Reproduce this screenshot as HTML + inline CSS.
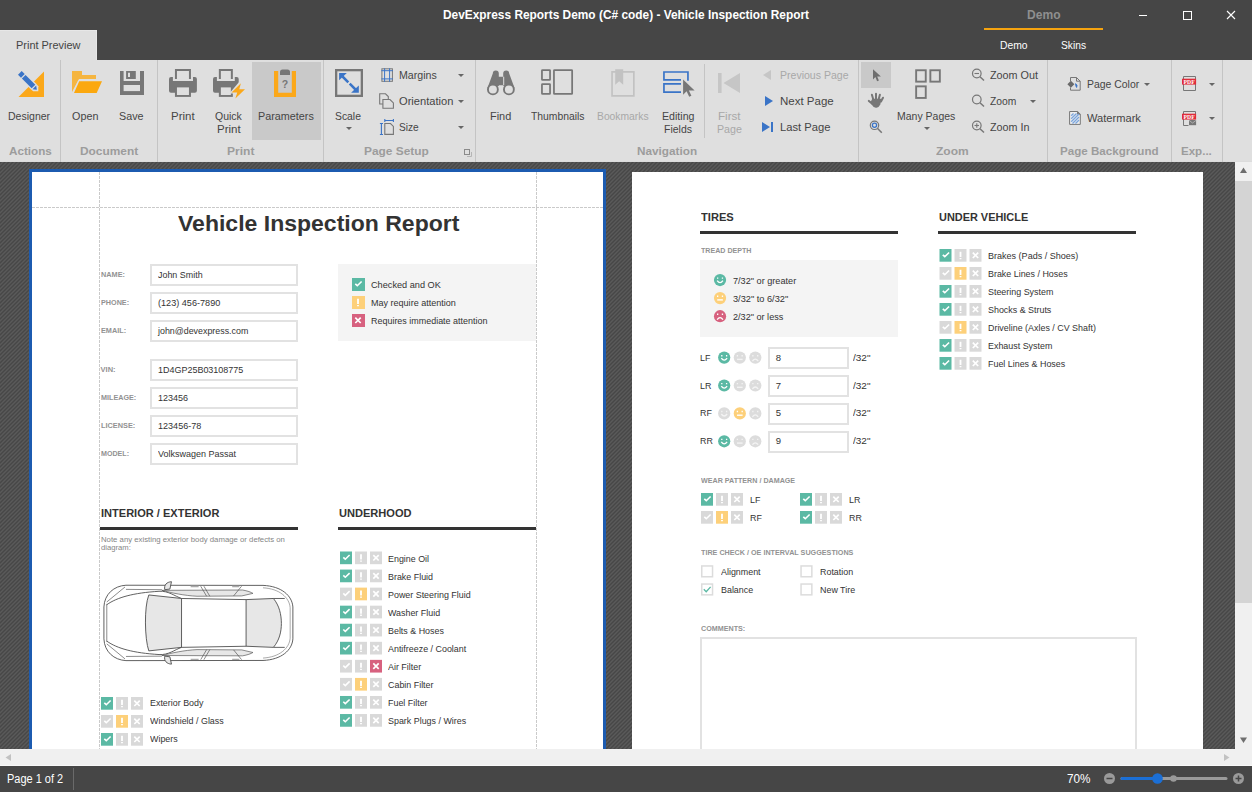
<!DOCTYPE html>
<html><head><meta charset="utf-8">
<style>
*{margin:0;padding:0;box-sizing:border-box}
html,body{width:1252px;height:792px;overflow:hidden;background:#464646;font-family:"Liberation Sans",sans-serif;position:relative}
.a{position:absolute}
.t{position:absolute;white-space:nowrap;line-height:1;transform-origin:0 0}
</style></head><body>
<div class="a" style="left:984px;top:28px;width:119px;height:2px;background:#f5a30f;"></div><div class="a" style="left:0px;top:30px;width:97px;height:31px;background:#dfdfdf;border-top:1px solid #e7e7e7;border-right:1px solid #e7e7e7"></div><div class="a" style="left:0px;top:60px;width:1252px;height:101px;background:#dfdfdf;"></div><div class="a" style="left:0px;top:161px;width:1252px;height:1px;background:#dcdcdc;"></div><div class="a" style="left:60px;top:60px;width:1px;height:102px;background:#c4c4c4;"></div><div class="a" style="left:157px;top:60px;width:1px;height:102px;background:#c4c4c4;"></div><div class="a" style="left:323px;top:60px;width:1px;height:102px;background:#c4c4c4;"></div><div class="a" style="left:475px;top:60px;width:1px;height:102px;background:#c4c4c4;"></div><div class="a" style="left:858px;top:60px;width:1px;height:102px;background:#c4c4c4;"></div><div class="a" style="left:1047px;top:60px;width:1px;height:102px;background:#c4c4c4;"></div><div class="a" style="left:1171px;top:60px;width:1px;height:102px;background:#c4c4c4;"></div><div class="a" style="left:1222px;top:60px;width:1px;height:102px;background:#c4c4c4;"></div><div class="a" style="left:704px;top:64px;width:1px;height:74px;background:#c4c4c4;"></div><div class="a" style="left:252px;top:62px;width:69px;height:78px;background:#c9c9c9;"></div><div class="a" style="left:861px;top:62px;width:30px;height:26px;background:#c9c9c9;"></div><svg class="a" style="left:0;top:162px" width="1235" height="587">
<defs><pattern id="st" width="4" height="4" patternUnits="userSpaceOnUse" patternTransform="translate(3,0)">
<rect width="4" height="4" fill="#474747"/>
<path d="M0 4L4 0M-1 1L1 -1M3 5L5 3" stroke="#5a5a5a" stroke-width="1.4"/>
</pattern></defs><rect width="1235" height="587" fill="url(#st)"/></svg><div class="a" style="left:1235px;top:162px;width:17px;height:587px;background:#f0f0f0;"></div><div class="a" style="left:1235px;top:181px;width:17px;height:422px;background:#d4d4d4;"></div><div class="a" style="left:0px;top:749px;width:1252px;height:17px;background:#f0f0f0;"></div><div class="a" style="left:0px;top:765px;width:1252px;height:1px;background:#f8f8f8;"></div><div class="a" style="left:0px;top:766px;width:1252px;height:26px;background:#464646;"></div><div class="a" style="left:73px;top:768px;width:1px;height:22px;background:#6a6a6a;"></div>
<div class="a" style="left:0;top:0;width:1235px;height:749px;clip-path:inset(162px 0 0 0)"><div class="a" style="left:29px;top:169px;width:577px;height:600px;background:#ffffff;border:3px solid #1c5bb0;border-bottom:none"></div><div class="a" style="left:99px;top:172px;width:1px;height:600px;background:repeating-linear-gradient(180deg,#cacaca 0 3px,transparent 3px 4px)"></div><div class="a" style="left:536px;top:172px;width:1px;height:600px;background:repeating-linear-gradient(180deg,#cacaca 0 3px,transparent 3px 4px)"></div><div class="a" style="left:32px;top:207px;width:571px;height:1px;background:repeating-linear-gradient(90deg,#cacaca 0 3px,transparent 3px 4px)"></div><div class="a" style="left:150px;top:264px;width:148px;height:22px;background:#fff;border:2px solid #e2e2e2"></div><div class="a" style="left:150px;top:292px;width:148px;height:22px;background:#fff;border:2px solid #e2e2e2"></div><div class="a" style="left:150px;top:320px;width:148px;height:22px;background:#fff;border:2px solid #e2e2e2"></div><div class="a" style="left:150px;top:359px;width:148px;height:22px;background:#fff;border:2px solid #e2e2e2"></div><div class="a" style="left:150px;top:387px;width:148px;height:22px;background:#fff;border:2px solid #e2e2e2"></div><div class="a" style="left:150px;top:415px;width:148px;height:22px;background:#fff;border:2px solid #e2e2e2"></div><div class="a" style="left:150px;top:443px;width:148px;height:22px;background:#fff;border:2px solid #e2e2e2"></div><div class="a" style="left:338px;top:264px;width:198px;height:77px;background:#f4f4f4;"></div><div class="a" style="left:100px;top:527px;width:198px;height:3px;background:#333333;"></div><div class="a" style="left:338px;top:527px;width:198px;height:3px;background:#333333;"></div><svg class="a" style="left:0;top:0" width="1235" height="749" viewBox="0 0 1235 749"><rect x="352" y="278" width="13" height="13" fill="#5bb9a4"/><path d="M355.3 283.8L357.3 285.7L361.6 281.5" fill="none" stroke="#ffffff" stroke-width="1.6"/><rect x="352" y="296" width="13" height="13" fill="#fdd07a"/><path d="M358 298.8V304M358 304.9V306.2" fill="none" stroke="#ffffff" stroke-width="1.8"/><rect x="352" y="314" width="13" height="13" fill="#d7617f"/><path d="M355.3 317.6L360.7 323M360.7 317.6L355.3 323" fill="none" stroke="#ffffff" stroke-width="1.7"/><rect x="340" y="551.5" width="12" height="12.7" fill="#5bb9a4"/><path d="M343.3 557.3L345.3 559.2L349.6 555.0" fill="none" stroke="#ffffff" stroke-width="1.6"/><rect x="355" y="551.5" width="12" height="12.7" fill="#d9d9d9"/><path d="M361 554.3V559.5M361 560.4V561.7" fill="none" stroke="#ffffff" stroke-width="1.8"/><rect x="370" y="551.5" width="12" height="12.7" fill="#d9d9d9"/><path d="M373.3 555.1L378.7 560.5M378.7 555.1L373.3 560.5" fill="none" stroke="#ffffff" stroke-width="1.7"/><rect x="340" y="569.56" width="12" height="12.7" fill="#5bb9a4"/><path d="M343.3 575.3599999999999L345.3 577.26L349.6 573.06" fill="none" stroke="#ffffff" stroke-width="1.6"/><rect x="355" y="569.56" width="12" height="12.7" fill="#d9d9d9"/><path d="M361 572.3599999999999V577.56M361 578.4599999999999V579.76" fill="none" stroke="#ffffff" stroke-width="1.8"/><rect x="370" y="569.56" width="12" height="12.7" fill="#d9d9d9"/><path d="M373.3 573.16L378.7 578.56M378.7 573.16L373.3 578.56" fill="none" stroke="#ffffff" stroke-width="1.7"/><rect x="340" y="587.62" width="12" height="12.7" fill="#d9d9d9"/><path d="M343.3 593.42L345.3 595.32L349.6 591.12" fill="none" stroke="#ffffff" stroke-width="1.6"/><rect x="355" y="587.62" width="12" height="12.7" fill="#fdd07a"/><path d="M361 590.42V595.62M361 596.52V597.82" fill="none" stroke="#ffffff" stroke-width="1.8"/><rect x="370" y="587.62" width="12" height="12.7" fill="#d9d9d9"/><path d="M373.3 591.22L378.7 596.62M378.7 591.22L373.3 596.62" fill="none" stroke="#ffffff" stroke-width="1.7"/><rect x="340" y="605.68" width="12" height="12.7" fill="#5bb9a4"/><path d="M343.3 611.4799999999999L345.3 613.38L349.6 609.18" fill="none" stroke="#ffffff" stroke-width="1.6"/><rect x="355" y="605.68" width="12" height="12.7" fill="#d9d9d9"/><path d="M361 608.4799999999999V613.68M361 614.5799999999999V615.88" fill="none" stroke="#ffffff" stroke-width="1.8"/><rect x="370" y="605.68" width="12" height="12.7" fill="#d9d9d9"/><path d="M373.3 609.28L378.7 614.68M378.7 609.28L373.3 614.68" fill="none" stroke="#ffffff" stroke-width="1.7"/><rect x="340" y="623.74" width="12" height="12.7" fill="#5bb9a4"/><path d="M343.3 629.54L345.3 631.44L349.6 627.24" fill="none" stroke="#ffffff" stroke-width="1.6"/><rect x="355" y="623.74" width="12" height="12.7" fill="#d9d9d9"/><path d="M361 626.54V631.74M361 632.64V633.94" fill="none" stroke="#ffffff" stroke-width="1.8"/><rect x="370" y="623.74" width="12" height="12.7" fill="#d9d9d9"/><path d="M373.3 627.34L378.7 632.74M378.7 627.34L373.3 632.74" fill="none" stroke="#ffffff" stroke-width="1.7"/><rect x="340" y="641.8" width="12" height="12.7" fill="#5bb9a4"/><path d="M343.3 647.5999999999999L345.3 649.5L349.6 645.3" fill="none" stroke="#ffffff" stroke-width="1.6"/><rect x="355" y="641.8" width="12" height="12.7" fill="#d9d9d9"/><path d="M361 644.5999999999999V649.8M361 650.6999999999999V652.0" fill="none" stroke="#ffffff" stroke-width="1.8"/><rect x="370" y="641.8" width="12" height="12.7" fill="#d9d9d9"/><path d="M373.3 645.4L378.7 650.8M378.7 645.4L373.3 650.8" fill="none" stroke="#ffffff" stroke-width="1.7"/><rect x="340" y="659.86" width="12" height="12.7" fill="#d9d9d9"/><path d="M343.3 665.66L345.3 667.5600000000001L349.6 663.36" fill="none" stroke="#ffffff" stroke-width="1.6"/><rect x="355" y="659.86" width="12" height="12.7" fill="#d9d9d9"/><path d="M361 662.66V667.86M361 668.76V670.0600000000001" fill="none" stroke="#ffffff" stroke-width="1.8"/><rect x="370" y="659.86" width="12" height="12.7" fill="#d7617f"/><path d="M373.3 663.46L378.7 668.86M378.7 663.46L373.3 668.86" fill="none" stroke="#ffffff" stroke-width="1.7"/><rect x="340" y="677.92" width="12" height="12.7" fill="#d9d9d9"/><path d="M343.3 683.7199999999999L345.3 685.62L349.6 681.42" fill="none" stroke="#ffffff" stroke-width="1.6"/><rect x="355" y="677.92" width="12" height="12.7" fill="#fdd07a"/><path d="M361 680.7199999999999V685.92M361 686.8199999999999V688.12" fill="none" stroke="#ffffff" stroke-width="1.8"/><rect x="370" y="677.92" width="12" height="12.7" fill="#d9d9d9"/><path d="M373.3 681.52L378.7 686.92M378.7 681.52L373.3 686.92" fill="none" stroke="#ffffff" stroke-width="1.7"/><rect x="340" y="695.98" width="12" height="12.7" fill="#5bb9a4"/><path d="M343.3 701.78L345.3 703.6800000000001L349.6 699.48" fill="none" stroke="#ffffff" stroke-width="1.6"/><rect x="355" y="695.98" width="12" height="12.7" fill="#d9d9d9"/><path d="M361 698.78V703.98M361 704.88V706.1800000000001" fill="none" stroke="#ffffff" stroke-width="1.8"/><rect x="370" y="695.98" width="12" height="12.7" fill="#d9d9d9"/><path d="M373.3 699.58L378.7 704.98M378.7 699.58L373.3 704.98" fill="none" stroke="#ffffff" stroke-width="1.7"/><rect x="340" y="714.04" width="12" height="12.7" fill="#5bb9a4"/><path d="M343.3 719.8399999999999L345.3 721.74L349.6 717.54" fill="none" stroke="#ffffff" stroke-width="1.6"/><rect x="355" y="714.04" width="12" height="12.7" fill="#d9d9d9"/><path d="M361 716.8399999999999V722.04M361 722.9399999999999V724.24" fill="none" stroke="#ffffff" stroke-width="1.8"/><rect x="370" y="714.04" width="12" height="12.7" fill="#d9d9d9"/><path d="M373.3 717.64L378.7 723.04M378.7 717.64L373.3 723.04" fill="none" stroke="#ffffff" stroke-width="1.7"/><rect x="101" y="697" width="12" height="12.7" fill="#5bb9a4"/><path d="M104.3 702.8L106.3 704.7L110.6 700.5" fill="none" stroke="#ffffff" stroke-width="1.6"/><rect x="116" y="697" width="12" height="12.7" fill="#d9d9d9"/><path d="M122 699.8V705M122 705.9V707.2" fill="none" stroke="#ffffff" stroke-width="1.8"/><rect x="131" y="697" width="12" height="12.7" fill="#d9d9d9"/><path d="M134.3 700.6L139.7 706M139.7 700.6L134.3 706" fill="none" stroke="#ffffff" stroke-width="1.7"/><rect x="101" y="715" width="12" height="12.7" fill="#d9d9d9"/><path d="M104.3 720.8L106.3 722.7L110.6 718.5" fill="none" stroke="#ffffff" stroke-width="1.6"/><rect x="116" y="715" width="12" height="12.7" fill="#fdd07a"/><path d="M122 717.8V723M122 723.9V725.2" fill="none" stroke="#ffffff" stroke-width="1.8"/><rect x="131" y="715" width="12" height="12.7" fill="#d9d9d9"/><path d="M134.3 718.6L139.7 724M139.7 718.6L134.3 724" fill="none" stroke="#ffffff" stroke-width="1.7"/><rect x="101" y="733" width="12" height="12.7" fill="#5bb9a4"/><path d="M104.3 738.8L106.3 740.7L110.6 736.5" fill="none" stroke="#ffffff" stroke-width="1.6"/><rect x="116" y="733" width="12" height="12.7" fill="#d9d9d9"/><path d="M122 735.8V741M122 741.9V743.2" fill="none" stroke="#ffffff" stroke-width="1.8"/><rect x="131" y="733" width="12" height="12.7" fill="#d9d9d9"/><path d="M134.3 736.6L139.7 742M139.7 736.6L134.3 742" fill="none" stroke="#ffffff" stroke-width="1.7"/><g transform="translate(98,575) scale(0.15974)" fill="none" stroke="#4a4a4a" stroke-width="5.5">
<path d="M175 64L1033 65C1150 70 1215 130 1220 200L1220 400C1215 470 1150 530 1033 535L175 536C100 532 40 480 37 400L37 200C40 120 100 68 175 64Z" fill="#fff"/>
<path d="M1033 80C1135 86 1198 140 1203 205L1203 395C1198 460 1135 514 1033 520" stroke-width="3.5" stroke="#666"/>
<path d="M55 181L55 419M55 169L169 75M55 431L169 525" stroke-width="4"/>
<path d="M55 186C120 140 220 112 382 102C440 98 480 132 523 147M55 414C120 460 220 488 382 498C440 502 480 468 523 453"/>
<path d="M318 125L523 147L523 453L318 475C292 400 288 200 318 125Z" fill="#e7e7e7"/>
<path d="M927 154L1098 147C1135 190 1148 250 1148 303C1148 356 1135 410 1098 453L927 446Z" fill="#e7e7e7"/>
<path d="M523 147L927 154M523 453L927 446M1098 147L1169 147M1098 453L1169 453"/>
<path d="M400 96L905 94C935 99 960 108 970 115L900 131L620 133C540 129 460 112 400 96Z" fill="#e7e7e7" stroke-width="4"/>
<path d="M400 504L905 506C935 501 960 492 970 485L900 469L620 467C540 471 460 488 400 504Z" fill="#e7e7e7" stroke-width="4"/>
<path d="M175 90L400 92M175 510L400 508" stroke-width="4"/>
<path d="M643 70L680 133M663 70L700 133M643 530L680 467M663 530L700 467M899 70L849 131M899 530L849 469" stroke-width="4"/>
<path d="M418 92C412 62 430 44 460 42L450 88Z" fill="#e7e7e7"/>
<path d="M418 508C412 538 430 556 460 558L450 512Z" fill="#e7e7e7"/>
<path d="M580 72H630M840 72H885M580 528H630M840 528H885" stroke-width="8" stroke="#aaa"/>
</g></svg><div class="t" id="t42" style="left:177.9px;top:213.48px;font-size:22px;font-weight:700;color:#333333;transform:scaleX(1.0463);">Vehicle Inspection Report</div><div class="t" id="t43" style="left:100.6px;top:270.75px;font-size:7.5px;font-weight:700;color:#929292;transform:scaleX(0.9759);">NAME:</div><div class="t" id="t44" style="left:158.2px;top:270.30px;font-size:9.8px;font-weight:400;color:#333333;transform:scaleX(0.9099);">John Smith</div><div class="t" id="t45" style="left:100.6px;top:298.75px;font-size:7.5px;font-weight:700;color:#929292;transform:scaleX(0.9633);">PHONE:</div><div class="t" id="t46" style="left:158.2px;top:298.30px;font-size:9.8px;font-weight:400;color:#333333;transform:scaleX(0.9299);">(123) 456-7890</div><div class="t" id="t47" style="left:100.6px;top:326.75px;font-size:7.5px;font-weight:700;color:#929292;transform:scaleX(0.9712);">EMAIL:</div><div class="t" id="t48" style="left:158.2px;top:326.30px;font-size:9.8px;font-weight:400;color:#333333;transform:scaleX(0.9048);">john@devexpress.com</div><div class="t" id="t49" style="left:100.6px;top:365.75px;font-size:7.5px;font-weight:700;color:#929292;transform:scaleX(1.0000);">VIN:</div><div class="t" id="t50" style="left:158.2px;top:365.30px;font-size:9.8px;font-weight:400;color:#333333;transform:scaleX(0.9157);">1D4GP25B03108775</div><div class="t" id="t51" style="left:100.6px;top:393.75px;font-size:7.5px;font-weight:700;color:#929292;transform:scaleX(0.9599);">MILEAGE:</div><div class="t" id="t52" style="left:158.2px;top:393.30px;font-size:9.8px;font-weight:400;color:#333333;transform:scaleX(0.9204);">123456</div><div class="t" id="t53" style="left:100.6px;top:421.75px;font-size:7.5px;font-weight:700;color:#929292;transform:scaleX(0.9796);">LICENSE:</div><div class="t" id="t54" style="left:158.2px;top:421.30px;font-size:9.8px;font-weight:400;color:#333333;transform:scaleX(0.9240);">123456-78</div><div class="t" id="t55" style="left:100.6px;top:449.75px;font-size:7.5px;font-weight:700;color:#929292;transform:scaleX(0.9495);">MODEL:</div><div class="t" id="t56" style="left:158.2px;top:449.30px;font-size:9.8px;font-weight:400;color:#333333;transform:scaleX(0.9168);">Volkswagen Passat</div><div class="t" id="t57" style="left:370.5px;top:280.46px;font-size:9.5px;font-weight:400;color:#333333;transform:scaleX(0.9646);">Checked and OK</div><div class="t" id="t58" style="left:370.5px;top:298.46px;font-size:9.5px;font-weight:400;color:#333333;transform:scaleX(0.9501);">May require attention</div><div class="t" id="t59" style="left:370.5px;top:316.46px;font-size:9.5px;font-weight:400;color:#333333;transform:scaleX(0.9419);">Requires immediate attention</div><div class="t" id="t60" style="left:100.9px;top:507.69px;font-size:11px;font-weight:700;color:#333333;transform:scaleX(1.0037);">INTERIOR / EXTERIOR</div><div class="t" id="t61" style="left:100.7px;top:535.97px;font-size:7px;font-weight:400;color:#858585;transform:scaleX(1.1094);">Note any existing exterior body damage or defects on</div><div class="t" id="t62" style="left:100.7px;top:544.47px;font-size:7px;font-weight:400;color:#858585;transform:scaleX(1.0942);">diagram:</div><div class="t" id="t63" style="left:339.2px;top:507.69px;font-size:11px;font-weight:700;color:#333333;transform:scaleX(1.0066);">UNDERHOOD</div><div class="t" id="t64" style="left:387.8px;top:553.56px;font-size:9.5px;font-weight:400;color:#333333;transform:scaleX(0.937);">Engine Oil</div><div class="t" id="t65" style="left:387.8px;top:571.62px;font-size:9.5px;font-weight:400;color:#333333;transform:scaleX(0.937);">Brake Fluid</div><div class="t" id="t66" style="left:387.8px;top:589.68px;font-size:9.5px;font-weight:400;color:#333333;transform:scaleX(0.937);">Power Steering Fluid</div><div class="t" id="t67" style="left:387.8px;top:607.74px;font-size:9.5px;font-weight:400;color:#333333;transform:scaleX(0.937);">Washer Fluid</div><div class="t" id="t68" style="left:387.8px;top:625.80px;font-size:9.5px;font-weight:400;color:#333333;transform:scaleX(0.937);">Belts &amp; Hoses</div><div class="t" id="t69" style="left:387.8px;top:643.86px;font-size:9.5px;font-weight:400;color:#333333;transform:scaleX(0.937);">Antifreeze / Coolant</div><div class="t" id="t70" style="left:387.8px;top:661.92px;font-size:9.5px;font-weight:400;color:#333333;transform:scaleX(0.937);">Air Filter</div><div class="t" id="t71" style="left:387.8px;top:679.98px;font-size:9.5px;font-weight:400;color:#333333;transform:scaleX(0.937);">Cabin Filter</div><div class="t" id="t72" style="left:387.8px;top:698.04px;font-size:9.5px;font-weight:400;color:#333333;transform:scaleX(0.937);">Fuel Filter</div><div class="t" id="t73" style="left:387.8px;top:716.10px;font-size:9.5px;font-weight:400;color:#333333;transform:scaleX(0.937);">Spark Plugs / Wires</div><div class="t" id="t74" style="left:149.5px;top:697.86px;font-size:9.5px;font-weight:400;color:#333333;transform:scaleX(0.937);">Exterior Body</div><div class="t" id="t75" style="left:149.5px;top:715.86px;font-size:9.5px;font-weight:400;color:#333333;transform:scaleX(0.937);">Windshield / Glass</div><div class="t" id="t76" style="left:149.5px;top:733.86px;font-size:9.5px;font-weight:400;color:#333333;transform:scaleX(0.937);">Wipers</div><div class="a" style="left:632px;top:172px;width:571px;height:600px;background:#ffffff;"></div><div class="a" style="left:700px;top:231px;width:198px;height:3px;background:#333333;"></div><div class="a" style="left:938px;top:231px;width:198px;height:3px;background:#333333;"></div><div class="a" style="left:700px;top:260px;width:198px;height:77px;background:#f4f4f4;"></div><div class="a" style="left:768px;top:347px;width:81px;height:22px;background:#fff;border:2px solid #e2e2e2"></div><div class="a" style="left:768px;top:375px;width:81px;height:22px;background:#fff;border:2px solid #e2e2e2"></div><div class="a" style="left:768px;top:403px;width:81px;height:22px;background:#fff;border:2px solid #e2e2e2"></div><div class="a" style="left:768px;top:431px;width:81px;height:22px;background:#fff;border:2px solid #e2e2e2"></div><div class="a" style="left:700px;top:637px;width:437px;height:200px;background:#fff;border:2px solid #e2e2e2"></div><svg class="a" style="left:0;top:0" width="1235" height="749" viewBox="0 0 1235 749"><circle cx="720.05" cy="280.05" r="6.1" fill="#5bb9a4"/><path d="M717.65 277.45V278.85M722.4499999999999 277.45V278.85" stroke="#ffffff" stroke-width="1.3"/><path d="M717.15 280.65000000000003Q720.05 284.65000000000003 722.9499999999999 280.65000000000003" fill="none" stroke="#ffffff" stroke-width="1.3"/><circle cx="720.05" cy="298.1" r="6.1" fill="#fdd07a"/><path d="M717.65 295.5V296.90000000000003M722.4499999999999 295.5V296.90000000000003" stroke="#ffffff" stroke-width="1.3"/><path d="M717.25 299.90000000000003H722.8499999999999" stroke="#ffffff" stroke-width="1.4"/><circle cx="720.05" cy="316.2" r="6.1" fill="#d7617f"/><path d="M717.65 313.59999999999997V315.0M722.4499999999999 313.59999999999997V315.0" stroke="#ffffff" stroke-width="1.3"/><path d="M717.15 319.59999999999997Q720.05 315.8 722.9499999999999 319.59999999999997" fill="none" stroke="#ffffff" stroke-width="1.3"/><circle cx="724.2" cy="357.6" r="6.1" fill="#5bb9a4"/><path d="M721.8000000000001 355.0V356.40000000000003M726.6 355.0V356.40000000000003" stroke="#ffffff" stroke-width="1.3"/><path d="M721.3000000000001 358.20000000000005Q724.2 362.20000000000005 727.1 358.20000000000005" fill="none" stroke="#ffffff" stroke-width="1.3"/><circle cx="739.8" cy="357.6" r="6.1" fill="#dcdcdc"/><path d="M737.4 355.0V356.40000000000003M742.1999999999999 355.0V356.40000000000003" stroke="#f3f3f3" stroke-width="1.3"/><path d="M737.0 359.40000000000003H742.5999999999999" stroke="#f3f3f3" stroke-width="1.4"/><circle cx="755.3" cy="357.6" r="6.1" fill="#dcdcdc"/><path d="M752.9 355.0V356.40000000000003M757.6999999999999 355.0V356.40000000000003" stroke="#f3f3f3" stroke-width="1.3"/><path d="M752.4 361.0Q755.3 357.20000000000005 758.1999999999999 361.0" fill="none" stroke="#f3f3f3" stroke-width="1.3"/><circle cx="724.2" cy="385.5" r="6.1" fill="#5bb9a4"/><path d="M721.8000000000001 382.9V384.3M726.6 382.9V384.3" stroke="#ffffff" stroke-width="1.3"/><path d="M721.3000000000001 386.1Q724.2 390.1 727.1 386.1" fill="none" stroke="#ffffff" stroke-width="1.3"/><circle cx="739.8" cy="385.5" r="6.1" fill="#dcdcdc"/><path d="M737.4 382.9V384.3M742.1999999999999 382.9V384.3" stroke="#f3f3f3" stroke-width="1.3"/><path d="M737.0 387.3H742.5999999999999" stroke="#f3f3f3" stroke-width="1.4"/><circle cx="755.3" cy="385.5" r="6.1" fill="#dcdcdc"/><path d="M752.9 382.9V384.3M757.6999999999999 382.9V384.3" stroke="#f3f3f3" stroke-width="1.3"/><path d="M752.4 388.9Q755.3 385.1 758.1999999999999 388.9" fill="none" stroke="#f3f3f3" stroke-width="1.3"/><circle cx="724.2" cy="413.40000000000003" r="6.1" fill="#dcdcdc"/><path d="M721.8000000000001 410.8V412.20000000000005M726.6 410.8V412.20000000000005" stroke="#f3f3f3" stroke-width="1.3"/><path d="M721.3000000000001 414.00000000000006Q724.2 418.00000000000006 727.1 414.00000000000006" fill="none" stroke="#f3f3f3" stroke-width="1.3"/><circle cx="739.8" cy="413.40000000000003" r="6.1" fill="#fdd07a"/><path d="M737.4 410.8V412.20000000000005M742.1999999999999 410.8V412.20000000000005" stroke="#ffffff" stroke-width="1.3"/><path d="M737.0 415.20000000000005H742.5999999999999" stroke="#ffffff" stroke-width="1.4"/><circle cx="755.3" cy="413.40000000000003" r="6.1" fill="#dcdcdc"/><path d="M752.9 410.8V412.20000000000005M757.6999999999999 410.8V412.20000000000005" stroke="#f3f3f3" stroke-width="1.3"/><path d="M752.4 416.8Q755.3 413.00000000000006 758.1999999999999 416.8" fill="none" stroke="#f3f3f3" stroke-width="1.3"/><circle cx="724.2" cy="441.3" r="6.1" fill="#5bb9a4"/><path d="M721.8000000000001 438.7V440.1M726.6 438.7V440.1" stroke="#ffffff" stroke-width="1.3"/><path d="M721.3000000000001 441.90000000000003Q724.2 445.90000000000003 727.1 441.90000000000003" fill="none" stroke="#ffffff" stroke-width="1.3"/><circle cx="739.8" cy="441.3" r="6.1" fill="#dcdcdc"/><path d="M737.4 438.7V440.1M742.1999999999999 438.7V440.1" stroke="#f3f3f3" stroke-width="1.3"/><path d="M737.0 443.1H742.5999999999999" stroke="#f3f3f3" stroke-width="1.4"/><circle cx="755.3" cy="441.3" r="6.1" fill="#dcdcdc"/><path d="M752.9 438.7V440.1M757.6999999999999 438.7V440.1" stroke="#f3f3f3" stroke-width="1.3"/><path d="M752.4 444.7Q755.3 440.90000000000003 758.1999999999999 444.7" fill="none" stroke="#f3f3f3" stroke-width="1.3"/><rect x="939.5" y="249.0" width="12" height="12.7" fill="#5bb9a4"/><path d="M942.8 254.8L944.8 256.7L949.1 252.5" fill="none" stroke="#fff" stroke-width="1.6"/><rect x="954.5" y="249.0" width="12" height="12.7" fill="#d9d9d9"/><path d="M960.5 251.8V257.0M960.5 257.9V259.2" fill="none" stroke="#fff" stroke-width="1.8"/><rect x="969.5" y="249.0" width="12" height="12.7" fill="#d9d9d9"/><path d="M972.8 252.6L978.2 258.0M978.2 252.6L972.8 258.0" fill="none" stroke="#fff" stroke-width="1.7"/><rect x="939.5" y="267.0" width="12" height="12.7" fill="#d9d9d9"/><path d="M942.8 272.8L944.8 274.7L949.1 270.5" fill="none" stroke="#fff" stroke-width="1.6"/><rect x="954.5" y="267.0" width="12" height="12.7" fill="#fdd07a"/><path d="M960.5 269.8V275.0M960.5 275.9V277.2" fill="none" stroke="#fff" stroke-width="1.8"/><rect x="969.5" y="267.0" width="12" height="12.7" fill="#d9d9d9"/><path d="M972.8 270.6L978.2 276.0M978.2 270.6L972.8 276.0" fill="none" stroke="#fff" stroke-width="1.7"/><rect x="939.5" y="285.0" width="12" height="12.7" fill="#5bb9a4"/><path d="M942.8 290.8L944.8 292.7L949.1 288.5" fill="none" stroke="#fff" stroke-width="1.6"/><rect x="954.5" y="285.0" width="12" height="12.7" fill="#d9d9d9"/><path d="M960.5 287.8V293.0M960.5 293.9V295.2" fill="none" stroke="#fff" stroke-width="1.8"/><rect x="969.5" y="285.0" width="12" height="12.7" fill="#d9d9d9"/><path d="M972.8 288.6L978.2 294.0M978.2 288.6L972.8 294.0" fill="none" stroke="#fff" stroke-width="1.7"/><rect x="939.5" y="303.0" width="12" height="12.7" fill="#5bb9a4"/><path d="M942.8 308.8L944.8 310.7L949.1 306.5" fill="none" stroke="#fff" stroke-width="1.6"/><rect x="954.5" y="303.0" width="12" height="12.7" fill="#d9d9d9"/><path d="M960.5 305.8V311.0M960.5 311.9V313.2" fill="none" stroke="#fff" stroke-width="1.8"/><rect x="969.5" y="303.0" width="12" height="12.7" fill="#d9d9d9"/><path d="M972.8 306.6L978.2 312.0M978.2 306.6L972.8 312.0" fill="none" stroke="#fff" stroke-width="1.7"/><rect x="939.5" y="321.0" width="12" height="12.7" fill="#d9d9d9"/><path d="M942.8 326.8L944.8 328.7L949.1 324.5" fill="none" stroke="#fff" stroke-width="1.6"/><rect x="954.5" y="321.0" width="12" height="12.7" fill="#fdd07a"/><path d="M960.5 323.8V329.0M960.5 329.9V331.2" fill="none" stroke="#fff" stroke-width="1.8"/><rect x="969.5" y="321.0" width="12" height="12.7" fill="#d9d9d9"/><path d="M972.8 324.6L978.2 330.0M978.2 324.6L972.8 330.0" fill="none" stroke="#fff" stroke-width="1.7"/><rect x="939.5" y="339.0" width="12" height="12.7" fill="#5bb9a4"/><path d="M942.8 344.8L944.8 346.7L949.1 342.5" fill="none" stroke="#fff" stroke-width="1.6"/><rect x="954.5" y="339.0" width="12" height="12.7" fill="#d9d9d9"/><path d="M960.5 341.8V347.0M960.5 347.9V349.2" fill="none" stroke="#fff" stroke-width="1.8"/><rect x="969.5" y="339.0" width="12" height="12.7" fill="#d9d9d9"/><path d="M972.8 342.6L978.2 348.0M978.2 342.6L972.8 348.0" fill="none" stroke="#fff" stroke-width="1.7"/><rect x="939.5" y="357.0" width="12" height="12.7" fill="#5bb9a4"/><path d="M942.8 362.8L944.8 364.7L949.1 360.5" fill="none" stroke="#fff" stroke-width="1.6"/><rect x="954.5" y="357.0" width="12" height="12.7" fill="#d9d9d9"/><path d="M960.5 359.8V365.0M960.5 365.9V367.2" fill="none" stroke="#fff" stroke-width="1.8"/><rect x="969.5" y="357.0" width="12" height="12.7" fill="#d9d9d9"/><path d="M972.8 360.6L978.2 366.0M978.2 360.6L972.8 366.0" fill="none" stroke="#fff" stroke-width="1.7"/><rect x="701" y="493" width="12" height="12.7" fill="#5bb9a4"/><path d="M704.3 498.8L706.3 500.7L710.6 496.5" fill="none" stroke="#fff" stroke-width="1.6"/><rect x="716" y="493" width="12" height="12.7" fill="#d9d9d9"/><path d="M722 495.8V501M722 501.9V503.2" fill="none" stroke="#fff" stroke-width="1.8"/><rect x="731" y="493" width="12" height="12.7" fill="#d9d9d9"/><path d="M734.3 496.6L739.7 502M739.7 496.6L734.3 502" fill="none" stroke="#fff" stroke-width="1.7"/><rect x="701" y="511" width="12" height="12.7" fill="#d9d9d9"/><path d="M704.3 516.8L706.3 518.7L710.6 514.5" fill="none" stroke="#fff" stroke-width="1.6"/><rect x="716" y="511" width="12" height="12.7" fill="#fdd07a"/><path d="M722 513.8V519M722 519.9V521.2" fill="none" stroke="#fff" stroke-width="1.8"/><rect x="731" y="511" width="12" height="12.7" fill="#d9d9d9"/><path d="M734.3 514.6L739.7 520M739.7 514.6L734.3 520" fill="none" stroke="#fff" stroke-width="1.7"/><rect x="800" y="493" width="12" height="12.7" fill="#5bb9a4"/><path d="M803.3 498.8L805.3 500.7L809.6 496.5" fill="none" stroke="#fff" stroke-width="1.6"/><rect x="815" y="493" width="12" height="12.7" fill="#d9d9d9"/><path d="M821 495.8V501M821 501.9V503.2" fill="none" stroke="#fff" stroke-width="1.8"/><rect x="830" y="493" width="12" height="12.7" fill="#d9d9d9"/><path d="M833.3 496.6L838.7 502M838.7 496.6L833.3 502" fill="none" stroke="#fff" stroke-width="1.7"/><rect x="800" y="511" width="12" height="12.7" fill="#5bb9a4"/><path d="M803.3 516.8L805.3 518.7L809.6 514.5" fill="none" stroke="#fff" stroke-width="1.6"/><rect x="815" y="511" width="12" height="12.7" fill="#d9d9d9"/><path d="M821 513.8V519M821 519.9V521.2" fill="none" stroke="#fff" stroke-width="1.8"/><rect x="830" y="511" width="12" height="12.7" fill="#d9d9d9"/><path d="M833.3 514.6L838.7 520M838.7 514.6L833.3 520" fill="none" stroke="#fff" stroke-width="1.7"/><rect x="701.75" y="565.95" width="10.8" height="10.8" fill="#fff" stroke="#dcdcdc" stroke-width="1.5"/><rect x="701.75" y="584.0500000000001" width="10.8" height="10.8" fill="#fff" stroke="#dcdcdc" stroke-width="1.5"/><path d="M703.8 589.3000000000001L706.2 591.7L710.6 586.9000000000001" fill="none" stroke="#5bb9a4" stroke-width="1.3"/><rect x="801.05" y="565.95" width="10.8" height="10.8" fill="#fff" stroke="#dcdcdc" stroke-width="1.5"/><rect x="801.05" y="584.0500000000001" width="10.8" height="10.8" fill="#fff" stroke="#dcdcdc" stroke-width="1.5"/></svg><div class="t" id="t77" style="left:701.0px;top:211.89px;font-size:11px;font-weight:700;color:#333333;transform:scaleX(1.0122);">TIRES</div><div class="t" id="t78" style="left:939.0px;top:211.59px;font-size:11px;font-weight:700;color:#333333;transform:scaleX(0.9928);">UNDER VEHICLE</div><div class="t" id="t79" style="left:701.0px;top:247.05px;font-size:7.5px;font-weight:700;color:#929292;transform:scaleX(0.9467);">TREAD DEPTH</div><div class="t" id="t80" style="left:732.5px;top:276.36px;font-size:9.5px;font-weight:400;color:#333333;transform:scaleX(0.9619);">7/32" or greater</div><div class="t" id="t81" style="left:732.5px;top:294.46px;font-size:9.5px;font-weight:400;color:#333333;transform:scaleX(0.9695);">3/32" to 6/32"</div><div class="t" id="t82" style="left:732.5px;top:312.36px;font-size:9.5px;font-weight:400;color:#333333;transform:scaleX(0.9584);">2/32" or less</div><div class="t" id="t83" style="left:700.4px;top:352.66px;font-size:9.5px;font-weight:400;color:#333333;transform:scaleX(0.937);">LF</div><div class="t" id="t84" style="left:775.8px;top:352.66px;font-size:9.5px;font-weight:400;color:#333333;">8</div><div class="t" id="t85" style="left:853.2px;top:352.66px;font-size:9.5px;font-weight:400;color:#333333;transform:scaleX(1.0546);">/32"</div><div class="t" id="t86" style="left:700.4px;top:380.56px;font-size:9.5px;font-weight:400;color:#333333;transform:scaleX(0.937);">LR</div><div class="t" id="t87" style="left:775.8px;top:380.56px;font-size:9.5px;font-weight:400;color:#333333;">7</div><div class="t" id="t88" style="left:853.2px;top:380.56px;font-size:9.5px;font-weight:400;color:#333333;transform:scaleX(1.0546);">/32"</div><div class="t" id="t89" style="left:700.4px;top:408.46px;font-size:9.5px;font-weight:400;color:#333333;transform:scaleX(0.937);">RF</div><div class="t" id="t90" style="left:775.8px;top:408.46px;font-size:9.5px;font-weight:400;color:#333333;">5</div><div class="t" id="t91" style="left:853.2px;top:408.46px;font-size:9.5px;font-weight:400;color:#333333;transform:scaleX(1.0546);">/32"</div><div class="t" id="t92" style="left:700.4px;top:436.36px;font-size:9.5px;font-weight:400;color:#333333;transform:scaleX(0.937);">RR</div><div class="t" id="t93" style="left:775.8px;top:436.36px;font-size:9.5px;font-weight:400;color:#333333;">9</div><div class="t" id="t94" style="left:853.2px;top:436.36px;font-size:9.5px;font-weight:400;color:#333333;transform:scaleX(1.0546);">/32"</div><div class="t" id="t95" style="left:987.9px;top:251.06px;font-size:9.5px;font-weight:400;color:#333333;transform:scaleX(0.9501);">Brakes (Pads / Shoes)</div><div class="t" id="t96" style="left:987.9px;top:269.06px;font-size:9.5px;font-weight:400;color:#333333;transform:scaleX(0.937);">Brake Lines / Hoses</div><div class="t" id="t97" style="left:987.9px;top:287.06px;font-size:9.5px;font-weight:400;color:#333333;transform:scaleX(0.937);">Steering System</div><div class="t" id="t98" style="left:987.9px;top:305.06px;font-size:9.5px;font-weight:400;color:#333333;transform:scaleX(0.937);">Shocks &amp; Struts</div><div class="t" id="t99" style="left:987.9px;top:323.06px;font-size:9.5px;font-weight:400;color:#333333;transform:scaleX(0.937);">Driveline (Axles / CV Shaft)</div><div class="t" id="t100" style="left:987.9px;top:341.06px;font-size:9.5px;font-weight:400;color:#333333;transform:scaleX(0.937);">Exhaust System</div><div class="t" id="t101" style="left:987.9px;top:359.06px;font-size:9.5px;font-weight:400;color:#333333;transform:scaleX(0.937);">Fuel Lines &amp; Hoses</div><div class="t" id="t102" style="left:700.7px;top:477.05px;font-size:7.5px;font-weight:700;color:#929292;transform:scaleX(0.9516);">WEAR PATTERN / DAMAGE</div><div class="t" id="t103" style="left:749.9px;top:495.06px;font-size:9.5px;font-weight:400;color:#333333;transform:scaleX(0.937);">LF</div><div class="t" id="t104" style="left:749.9px;top:513.06px;font-size:9.5px;font-weight:400;color:#333333;transform:scaleX(0.937);">RF</div><div class="t" id="t105" style="left:848.8px;top:495.06px;font-size:9.5px;font-weight:400;color:#333333;transform:scaleX(0.937);">LR</div><div class="t" id="t106" style="left:848.8px;top:513.06px;font-size:9.5px;font-weight:400;color:#333333;transform:scaleX(0.937);">RR</div><div class="t" id="t107" style="left:700.7px;top:548.65px;font-size:7.5px;font-weight:700;color:#929292;transform:scaleX(0.9598);">TIRE CHECK / OE INTERVAL SUGGESTIONS</div><div class="t" id="t108" style="left:720.7px;top:566.56px;font-size:9.5px;font-weight:400;color:#333333;transform:scaleX(0.937);">Alignment</div><div class="t" id="t109" style="left:720.7px;top:584.66px;font-size:9.5px;font-weight:400;color:#333333;transform:scaleX(0.937);">Balance</div><div class="t" id="t110" style="left:819.5px;top:566.56px;font-size:9.5px;font-weight:400;color:#333333;transform:scaleX(0.937);">Rotation</div><div class="t" id="t111" style="left:819.5px;top:584.66px;font-size:9.5px;font-weight:400;color:#333333;transform:scaleX(0.937);">New Tire</div><div class="t" id="t112" style="left:700.7px;top:624.65px;font-size:7.5px;font-weight:700;color:#929292;transform:scaleX(0.9557);">COMMENTS:</div></div>
<svg class="a" style="left:0;top:0" width="1252" height="792" viewBox="0 0 1252 792"><path d="M1139 15.5H1147" stroke="#fff" stroke-width="1"/><rect x="1183.5" y="11.5" width="8" height="8" fill="none" stroke="#fff" stroke-width="1"/><path d="M1227 11L1235 19M1235 11L1227 19" stroke="#fff" stroke-width="1.1"/><path d="M346 127.0H352L349 130.0Z" fill="#666"/><path d="M458 74.0H464L461 77.0Z" fill="#666"/><path d="M458 100.0H464L461 103.0Z" fill="#666"/><path d="M458 126.0H464L461 129.0Z" fill="#666"/><path d="M924 127.0H930L927 130.0Z" fill="#666"/><path d="M1030 100.0H1036L1033 103.0Z" fill="#666"/><path d="M1144 83.0H1150L1147 86.0Z" fill="#666"/><path d="M1209 83.0H1215L1212 86.0Z" fill="#666"/><path d="M1209 117.0H1215L1212 120.0Z" fill="#666"/><rect x="464.5" y="149.5" width="5" height="5" fill="none" stroke="#8a8a8a" stroke-width="1"/><path d="M467 156.5H471.5V152" fill="none" stroke="#b5b5b5" stroke-width="1"/><path d="M1240 173L1243.5 167.5L1247 173Z" fill="#6e6e6e"/><path d="M1240 737.5L1243.5 743L1247 737.5Z" fill="#6e6e6e"/><path d="M11 754L5.5 757.5L11 761Z" fill="#c2c2c2"/><path d="M1224 754L1229.5 757.5L1224 761Z" fill="#c2c2c2"/><circle cx="1109.5" cy="778.5" r="5.5" fill="#9a9a9a"/><path d="M1106.5 778.5H1112.5" stroke="#464646" stroke-width="1.5"/><circle cx="1238.5" cy="778.5" r="5.5" fill="#9a9a9a"/><path d="M1235.5 778.5H1241.5M1238.5 775.5V781.5" stroke="#464646" stroke-width="1.5"/><path d="M1122 778.5H1226" stroke="#9a9a9a" stroke-width="3" stroke-linecap="round"/><path d="M1122 778.5H1157" stroke="#1b6fd6" stroke-width="3" stroke-linecap="round"/><circle cx="1173.5" cy="778.5" r="3.3" fill="#9a9a9a"/><circle cx="1157.5" cy="778.5" r="5.3" fill="#1b6fd6"/><path d="M18.5 97L44 71.5V97Z" fill="#fba81a"/><path d="M21.83 69.46L35.97 83.60L38.30 86.20L38.30 91.20L33.20 91.20L30.60 88.97L16.46 74.83Z" fill="#dfdfdf"/><path d="M21.69 71.01L24.73 74.05L21.05 77.73L18.01 74.69Z" fill="#3a74c7"/><path d="M25.58 74.90L35.34 84.66L31.66 88.34L21.90 78.58Z" fill="#3a74c7"/><path d="M36.18 85.51L36.82 89.82L32.51 89.18Z" fill="#3a74c7"/><path d="M72 71H82V75H96V79H79L72 92Z" fill="#f5b540"/><path d="M78.3 80.3H102.5L97 93H72.5Z" fill="#dfdfdf"/><path d="M79.2 81.2H102L96.7 93H74Z" fill="#fba80f"/><path d="M120 71H144V95H120Z" fill="#777777"/><path d="M123.6 71H140V81H123.6Z" fill="#dfdfdf"/><path d="M126.1 71H135.8V79H126.1Z" fill="#777777"/><path d="M128 72.8H130V77H128Z" fill="#dfdfdf"/><path d="M123.6 85H140V91.1H123.6Z" fill="#dfdfdf"/><path d="M174.95 69H190.95V78.9H188.95V71H176.95V78.9H174.95Z" fill="#777777"/><path d="M169 79Q169 77 171 77H172.9V81H193.0V77H194.9Q196.9 77 196.9 79V90.8Q196.9 92.8 194.9 92.8H171Q169 92.8 169 90.8Z" fill="#777777"/><rect x="174.95" y="86.6" width="16" height="10.3" fill="#777777"/><rect x="176.95" y="87.4" width="12" height="7.6" fill="#dfdfdf"/><path d="M218.85 69H232.85V78.9H230.85V71H220.85V78.9H218.85Z" fill="#777777"/><path d="M213 79Q213 77 215 77H216.9V81H234.79999999999998V77H236.7Q238.7 77 238.7 79V90.8Q238.7 92.8 236.7 92.8H215Q213 92.8 213 90.8Z" fill="#777777"/><rect x="218.85" y="86.6" width="14" height="10.3" fill="#777777"/><rect x="220.85" y="87.4" width="10" height="7.6" fill="#dfdfdf"/><path d="M239.5 81.5L229.3 93.6H235.3L233.2 100.5L247.5 88H241.5L243.5 81.5Z" fill="#dfdfdf"/><path d="M240.9 83.2L231.5 92.6H237.2L235.4 98.6L245 89.2H239.3Z" fill="#fba81a"/><path d="M274 71H278.2V92.8H291.8V71H296V97H274Z" fill="#fba81a"/><path d="M280 75V72Q280 69.5 282.5 69.5H287.5Q290 69.5 290 72V75Z" fill="#777777"/><text x="285" y="88.3" font-family="Liberation Sans" font-weight="700" font-size="10.5" fill="#777777" text-anchor="middle">?</text><rect x="336.15" y="70.15" width="25.7" height="25.7" fill="none" stroke="#777777" stroke-width="2.3"/><path d="M342.5 76.5L348.3 82.3M349.7 83.7L355.5 89.5" stroke="#3a74c7" stroke-width="2.5"/><path d="M339.1 73.1H346.8L339.1 80.3Z" fill="#3a74c7"/><path d="M358.8 92.8H351.1L358.8 85.6Z" fill="#3a74c7"/><rect x="381.9" y="68.8" width="10.5" height="12.5" fill="none" stroke="#777777" stroke-width="1"/><path d="M384.6 68.3V81.8M389.6 68.3V81.8M381.4 70.7H392.9M381.4 78.9H392.9" stroke="#3a74c7" stroke-width="1"/><path d="M379.7 93.8H385.5L388.3 96.6V104H379.7Z" fill="none" stroke="#777777" stroke-width="1.1"/><path d="M382.9 99.5H390L393.4 102.9V108.2H382.9Z" fill="#dfdfdf" stroke="#777777" stroke-width="1.1"/><path d="M384.8 123.5H390.5L393.4 126.4V134.4H384.8Z" fill="none" stroke="#777777" stroke-width="1.1"/><path d="M381.4 123V135M379.9 123.5H383M379.9 134.5H383M384.3 120.5H393.9M384.8 119V122M393.4 119V122" stroke="#3a74c7" stroke-width="1.1"/><path d="M487.3 88.5L492.8 73.6A3 3 0 0 1 498.8 73.6V86ZM514.7 88.5L509.2 73.6A3 3 0 0 0 503.2 73.6V86ZM497.8 76.8H504.2V85.2H497.8Z" fill="#777777"/><circle cx="492.9" cy="89.4" r="4.95" fill="#dfdfdf" stroke="#777777" stroke-width="1.9"/><circle cx="508.9" cy="89.4" r="4.95" fill="#dfdfdf" stroke="#777777" stroke-width="1.9"/><rect x="541.95" y="70.05" width="8.1" height="9.9" rx="0.5" fill="none" stroke="#777777" stroke-width="1.75"/><rect x="541.95" y="84.05" width="8.1" height="9.9" rx="0.5" fill="none" stroke="#777777" stroke-width="1.75"/><rect x="553.95" y="70.05" width="18.2" height="23.9" rx="0.5" fill="none" stroke="#777777" stroke-width="1.75"/><path d="M612.05 71.85H633.85V95.85H612.05Z" fill="none" stroke="#c2c2c2" stroke-width="1.7"/><path d="M615.2 69.2H623.2V84.8L619.2 81.2L615.2 84.8Z" fill="#c2c2c2"/><path d="M681 79.9H663.95V72H687.95V80.8M681 83.9H663.95V92.05H681" fill="none" stroke="#3a74c7" stroke-width="1.7"/><path d="M683.1 79.6V94.8L686.6 91.3L689.2 96.8L691.4 95.8L688.9 90.4H694.6Z" fill="#dfdfdf" stroke="#dfdfdf" stroke-width="1.6"/><path d="M683.1 79.6V94.8L686.6 91.3L689.2 96.8L691.4 95.8L688.9 90.4H694.6Z" fill="#777777"/><path d="M718 73H721.6V93H718ZM740 73V93L723.5 83Z" fill="#c6c6c6"/><path d="M771 70V80L763 75Z" fill="#c6c6c6"/><path d="M765 96V106L773 101Z" fill="#3a74c7"/><path d="M762 122V132L770 127ZM771 122H773V132H771Z" fill="#3a74c7"/><path d="M873 69.3V79.4L875.4 77.1L877.1 81.3L878.9 80.6L877.2 76.5H880.9Z" fill="#6e6e6e"/><g stroke="#777777" stroke-linecap="round" fill="none" stroke-width="2"><path d="M871.9 94.7L873.3 99.5M876 93.7V99.5M879.9 94.7L878.6 99.5M883 97.7L881 101.5"/><path d="M868.9 101L872.5 103.8" stroke-width="2.2"/></g><path d="M872.3 98.8H881.6L880.3 104.6Q878.8 107.8 876.5 107.8H875.8Q873.5 107.8 871.8 104.8L870.5 102.3Z" fill="#777777"/><circle cx="874.5" cy="125.3" r="4.2" fill="none" stroke="#777777" stroke-width="1.2"/><circle cx="874.5" cy="125.3" r="2.1" fill="none" stroke="#3a74c7" stroke-width="1.3"/><path d="M877.6 128.4L881.8 132.8" stroke="#777777" stroke-width="1.5"/><rect x="916.15" y="70.25" width="9.6" height="11.4" fill="none" stroke="#777777" stroke-width="1.9"/><rect x="930.35" y="70.25" width="9.5" height="11.4" fill="none" stroke="#777777" stroke-width="1.9"/><rect x="916.15" y="86.35" width="9.6" height="11.6" fill="none" stroke="#777777" stroke-width="1.9"/><circle cx="976.8" cy="73.5" r="4.3" fill="none" stroke="#777777" stroke-width="1.2"/><path d="M980 76.7L984 80.5" stroke="#777777" stroke-width="1.5"/><path d="M974.5 73.5H979" stroke="#777777" stroke-width="1.1"/><circle cx="976.8" cy="99.5" r="4.3" fill="none" stroke="#777777" stroke-width="1.2"/><path d="M980 102.7L984 106.5" stroke="#777777" stroke-width="1.5"/><circle cx="976.8" cy="125.5" r="4.3" fill="none" stroke="#777777" stroke-width="1.2"/><path d="M980 128.7L984 132.5" stroke="#777777" stroke-width="1.5"/><path d="M974.5 125.5H979" stroke="#777777" stroke-width="1.1"/><path d="M976.8 123.2V127.8" stroke="#777777" stroke-width="1.1"/><path d="M1070.5 81V77.5H1076.5L1080.2 81.2V90.2H1070.5V87.5" fill="none" stroke="#777777" stroke-width="1"/><path d="M1076.5 77.5V81.2H1080.2" fill="none" stroke="#777777" stroke-width="1"/><path d="M1067.4 84.3L1070.9 80.8L1074.4 84.3L1070.9 87.8Z" fill="#6a6a6a"/><path d="M1075.6 83.6Q1078 85.5 1076.6 87.5Q1075.6 86.5 1075.6 83.6Z" fill="#3a74c7" stroke="#3a74c7" stroke-width="0.8"/><path d="M1069.6 111.5H1077.6L1080.3 114.2V124.4H1069.6Z" fill="#eeeeee" stroke="#777777" stroke-width="1"/><path d="M1077.6 111.5V114.2H1080.3" fill="#777777" stroke="#777777" stroke-width="1"/><path d="M1071.2 115.8L1073.5 113.5M1071.2 118.8L1076.5 113.5M1071.2 121.8L1079 114M1072.5 123.5L1079 117M1075.5 123.5L1079 120" stroke="#79a4dd" stroke-width="1.3"/><path d="M1183.5 76.5H1195.5V90.5H1183.5Z" fill="none" stroke="#777777" stroke-width="1"/><rect x="1182" y="78.7" width="14.1" height="5.9" fill="#e12c3a"/><text x="1189.1" y="83.5" font-family="Liberation Serif" font-weight="700" font-size="5.8" fill="#fff" text-anchor="middle" textLength="11" lengthAdjust="spacingAndGlyphs">PDF</text><path d="M1188.5 125.5H1183.5V111.5H1195.5V119" fill="none" stroke="#777777" stroke-width="1"/><rect x="1182" y="113.7" width="14.1" height="5.9" fill="#e12c3a"/><text x="1189.1" y="118.5" font-family="Liberation Serif" font-weight="700" font-size="5.8" fill="#fff" text-anchor="middle" textLength="11" lengthAdjust="spacingAndGlyphs">PDF</text><rect x="1189" y="120" width="7.1" height="5.2" fill="#777777"/><path d="M1189 120.3L1192.55 123L1196.1 120.3" fill="none" stroke="#bbb" stroke-width="0.8"/></svg>
<div class="t" id="t0" style="left:442.5px;top:8.84px;font-size:12px;font-weight:700;color:#ffffff;transform:scaleX(0.9907);">DevExpress Reports Demo (C# code) - Vehicle Inspection Report</div><div class="t" id="t1" style="left:1027.0px;top:8.84px;font-size:12px;font-weight:700;color:#8f8f8f;transform:scaleX(1.0047);">Demo</div><div class="t" id="t2" style="left:15.5px;top:40.19px;font-size:11px;font-weight:400;color:#444;transform:scaleX(0.9954);">Print Preview</div><div class="t" id="t3" style="left:1000.0px;top:39.69px;font-size:11px;font-weight:400;color:#ffffff;transform:scaleX(0.9372);">Demo</div><div class="t" id="t4" style="left:1060.5px;top:39.69px;font-size:11px;font-weight:400;color:#ffffff;transform:scaleX(0.9292);">Skins</div><div class="t" id="t5" style="left:8.8px;top:145.69px;font-size:11px;font-weight:700;color:#9c9c9c;transform:scaleX(1.0609);">Actions</div><div class="t" id="t6" style="left:79.9px;top:145.69px;font-size:11px;font-weight:700;color:#9c9c9c;transform:scaleX(1.0822);">Document</div><div class="t" id="t7" style="left:226.7px;top:145.69px;font-size:11px;font-weight:700;color:#9c9c9c;transform:scaleX(1.0933);">Print</div><div class="t" id="t8" style="left:363.7px;top:145.69px;font-size:11px;font-weight:700;color:#9c9c9c;transform:scaleX(1.0817);">Page Setup</div><div class="t" id="t9" style="left:636.9px;top:145.69px;font-size:11px;font-weight:700;color:#9c9c9c;transform:scaleX(1.0687);">Navigation</div><div class="t" id="t10" style="left:936.3px;top:145.69px;font-size:11px;font-weight:700;color:#9c9c9c;transform:scaleX(1.0917);">Zoom</div><div class="t" id="t11" style="left:1059.7px;top:145.69px;font-size:11px;font-weight:700;color:#9c9c9c;transform:scaleX(1.0542);">Page Background</div><div class="t" id="t12" style="left:1180.9px;top:145.69px;font-size:11px;font-weight:700;color:#9c9c9c;transform:scaleX(1.0496);">Exp...</div><div class="t" id="t13" style="left:8.2px;top:110.69px;font-size:11px;font-weight:400;color:#454545;transform:scaleX(0.9561);">Designer</div><div class="t" id="t14" style="left:72.1px;top:110.69px;font-size:11px;font-weight:400;color:#454545;transform:scaleX(0.9806);">Open</div><div class="t" id="t15" style="left:119.0px;top:110.69px;font-size:11px;font-weight:400;color:#454545;transform:scaleX(0.9769);">Save</div><div class="t" id="t16" style="left:170.8px;top:110.69px;font-size:11px;font-weight:400;color:#454545;transform:scaleX(1.0431);">Print</div><div class="t" id="t17" style="left:215.2px;top:110.69px;font-size:11px;font-weight:400;color:#454545;transform:scaleX(0.9529);">Quick</div><div class="t" id="t18" style="left:216.8px;top:123.99px;font-size:11px;font-weight:400;color:#454545;transform:scaleX(1.0475);">Print</div><div class="t" id="t19" style="left:257.9px;top:110.69px;font-size:11px;font-weight:400;color:#454545;transform:scaleX(0.9814);">Parameters</div><div class="t" id="t20" style="left:335.0px;top:110.69px;font-size:11px;font-weight:400;color:#454545;transform:scaleX(0.9407);">Scale</div><div class="t" id="t21" style="left:489.5px;top:110.69px;font-size:11px;font-weight:400;color:#454545;transform:scaleX(0.9950);">Find</div><div class="t" id="t22" style="left:530.5px;top:110.69px;font-size:11px;font-weight:400;color:#454545;transform:scaleX(0.9409);">Thumbnails</div><div class="t" id="t23" style="left:596.9px;top:110.69px;font-size:11px;font-weight:400;color:#a8a8a8;transform:scaleX(0.9376);">Bookmarks</div><div class="t" id="t24" style="left:662.2px;top:110.69px;font-size:11px;font-weight:400;color:#454545;transform:scaleX(0.9661);">Editing</div><div class="t" id="t25" style="left:663.7px;top:123.99px;font-size:11px;font-weight:400;color:#454545;transform:scaleX(0.9542);">Fields</div><div class="t" id="t26" style="left:717.9px;top:110.69px;font-size:11px;font-weight:400;color:#a8a8a8;transform:scaleX(1.0565);">First</div><div class="t" id="t27" style="left:716.8px;top:123.99px;font-size:11px;font-weight:400;color:#a8a8a8;transform:scaleX(0.9688);">Page</div><div class="t" id="t28" style="left:897.4px;top:110.69px;font-size:11px;font-weight:400;color:#454545;transform:scaleX(0.9533);">Many Pages</div><div class="t" id="t29" style="left:399.1px;top:69.69px;font-size:11px;font-weight:400;color:#454545;transform:scaleX(0.9636);">Margins</div><div class="t" id="t30" style="left:399.1px;top:95.69px;font-size:11px;font-weight:400;color:#454545;transform:scaleX(1.0109);">Orientation</div><div class="t" id="t31" style="left:399.1px;top:121.69px;font-size:11px;font-weight:400;color:#454545;transform:scaleX(0.9203);">Size</div><div class="t" id="t32" style="left:780.2px;top:69.89px;font-size:11px;font-weight:400;color:#a8a8a8;transform:scaleX(0.9574);">Previous Page</div><div class="t" id="t33" style="left:780.2px;top:95.69px;font-size:11px;font-weight:400;color:#454545;transform:scaleX(1.0453);">Next Page</div><div class="t" id="t34" style="left:780.2px;top:121.79px;font-size:11px;font-weight:400;color:#454545;transform:scaleX(1.0192);">Last Page</div><div class="t" id="t35" style="left:990.2px;top:69.69px;font-size:11px;font-weight:400;color:#454545;transform:scaleX(0.9815);">Zoom Out</div><div class="t" id="t36" style="left:990.2px;top:96.29px;font-size:11px;font-weight:400;color:#454545;transform:scaleX(0.9351);">Zoom</div><div class="t" id="t37" style="left:990.2px;top:122.09px;font-size:11px;font-weight:400;color:#454545;transform:scaleX(0.9787);">Zoom In</div><div class="t" id="t38" style="left:1087.2px;top:78.69px;font-size:11px;font-weight:400;color:#454545;transform:scaleX(0.9483);">Page Color</div><div class="t" id="t39" style="left:1087.2px;top:112.69px;font-size:11px;font-weight:400;color:#454545;transform:scaleX(1.0098);">Watermark</div><div class="t" id="t40" style="left:7.2px;top:772.84px;font-size:12px;font-weight:400;color:#ffffff;transform:scaleX(0.9138);">Page 1 of 2</div><div class="t" id="t41" style="left:1066.5px;top:772.84px;font-size:12px;font-weight:400;color:#ffffff;transform:scaleX(0.9779);">70%</div>
</body></html>
